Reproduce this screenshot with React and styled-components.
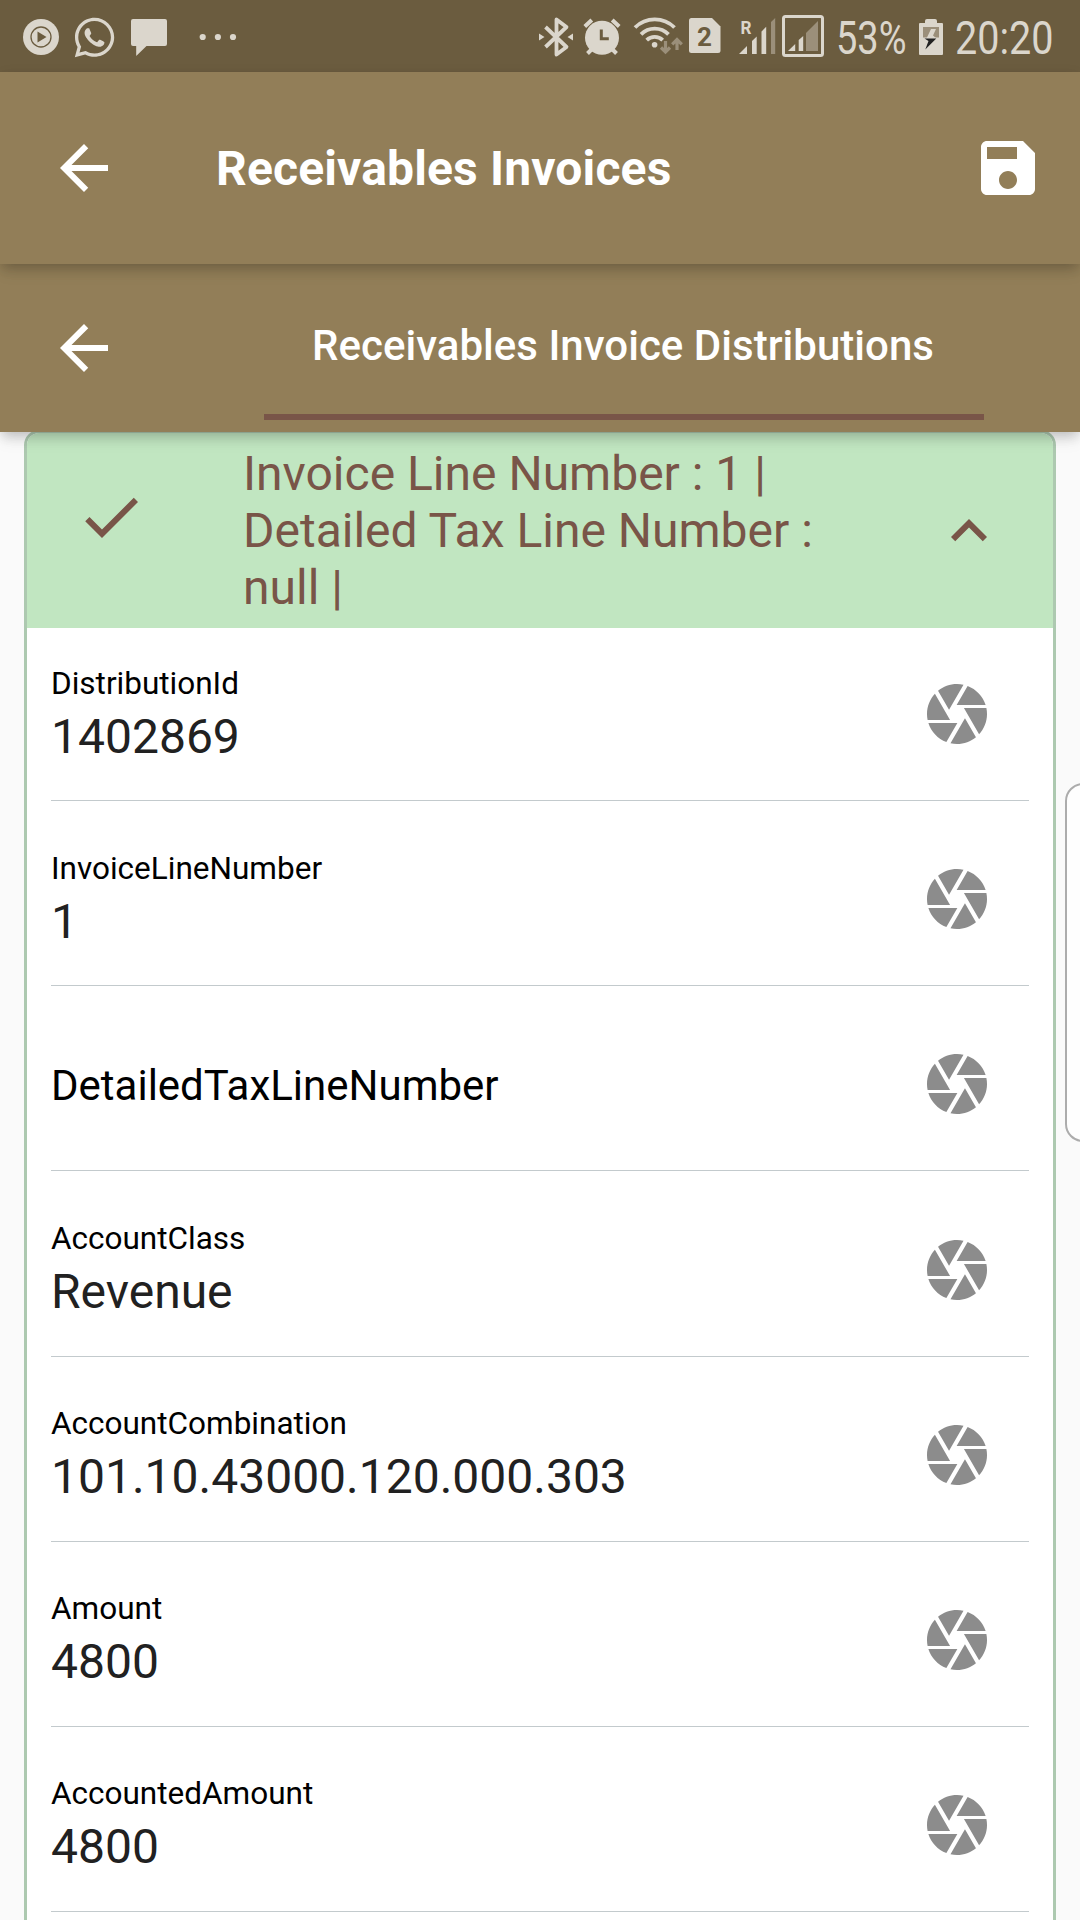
import React from "react";
import styled, { createGlobalStyle } from "styled-components";
import { FaWhatsapp } from "react-icons/fa";

const GlobalStyle = createGlobalStyle`
  *, *::before, *::after { box-sizing: border-box; }
  html, body { margin: 0; padding: 0; background: #fafafa; }
  body { font-family: Roboto, "Noto Sans", sans-serif; overflow: hidden; }
`;

const LIGHT = "#dbd6cc";
const DIM = "#9b8f7a";
const DARK = "#6b5c3f";

const Screen = styled.div`
  position: relative;
  display: flex;
  flex-direction: column;
  width: 1080px;
  height: 1920px;
  overflow: hidden;
  background: #fafafa;
`;

const StatusBar = styled.header`
  flex: none;
  display: flex;
  align-items: flex-start;
  height: 72px;
  padding-right: 1px;
  background: ${DARK};
  color: ${LIGHT};
`;

const StatusIcon = styled.svg`
  flex: none;
  display: block;
  width: ${(p) => p.$w}px;
  height: 72px;
  margin-left: ${(p) => p.$gap || 0}px;
  fill: ${LIGHT};
`;

const WhatsApp = styled(FaWhatsapp)`
  flex: none;
  width: 45px;
  height: 45px;
  margin: 14.5px 0 0 13px;
`;

const Spacer = styled.div`
  flex: 1;
`;

const StatusText = styled.div`
  flex: none;
  width: ${(p) => p.$w}px;
  margin-left: ${(p) => p.$gap}px;
  font-size: 46px;
  line-height: 77px;
  white-space: nowrap;
  transform: scaleX(${(p) => p.$scale});
  transform-origin: 0 50%;
`;

const Bar = styled.div`
  position: relative;
  z-index: ${(p) => p.$z};
  flex: none;
  display: flex;
  align-items: center;
  height: ${(p) => p.$h}px;
  padding: 0 36px 0 48px;
  background: #927e58;
  color: #fff;
  box-shadow: 0 6px 12px -3px rgba(0, 0, 0, 0.18), 0 10px 15px rgba(0, 0, 0, 0.05),
    0 3px 14px rgba(0, 0, 0, 0.06);
`;

const Icon = styled.svg`
  flex: none;
  display: block;
  width: 72px;
  height: 72px;
  fill: currentColor;
`;

const Title = styled.h1`
  flex: 1;
  margin: 0 0 0 96px;
  padding-top: 2px;
  font-size: 48px;
  line-height: 56px;
  font-weight: 700;
  letter-spacing: 0.15px;
  white-space: nowrap;
`;

const Tab = styled.div`
  display: flex;
  align-items: center;
  justify-content: center;
  width: 720px;
  height: 144px;
  margin: 0 0 0 144px;
  border-bottom: 6px solid #795548;
  font-size: 42px;
  line-height: 49px;
  font-weight: 500;
  letter-spacing: 0.03px;
  white-space: nowrap;
`;

const TabLabel = styled.span`
  padding-right: 2px;
`;

const Card = styled.section`
  flex: none;
  display: flex;
  flex-direction: column;
  height: 1540px;
  margin: -2px 24px 0;
  border: 3px solid #adc9b0;
  border-radius: 15px;
  background: #fff;
  overflow: hidden;
`;

const CardHeader = styled.div`
  flex: none;
  display: flex;
  align-items: center;
  height: 195px;
  padding: 0 48px;
  background: #c1e6c1;
  color: #795548;
`;

const CheckSlot = styled.div`
  flex: none;
  width: 168px;
  padding-bottom: 27px;
`;

const CardTitle = styled.div`
  flex: 1;
  font-size: 48px;
  line-height: 57px;
  white-space: pre;
`;

const Fields = styled.div`
  display: flex;
  flex-direction: column;
  padding: 0 24px;
`;

const Field = styled.div`
  flex: none;
  display: flex;
  justify-content: space-between;
  align-items: flex-end;
  height: 185.15px;
  padding-bottom: 31px;
  padding-right: 36px;
  border-bottom: 1px solid #c3cacd;
  &:first-child { height: 173.2px; }
`;

const FieldText = styled.div`
  display: flex;
  flex-direction: column;
  justify-content: center;
  height: 110px;
  padding-top: ${(p) => (p.$empty ? 4 : 0.7)}px;
`;

const Label = styled.label`
  font-size: ${(p) => (p.$empty ? 42 : 31.5)}px;
  line-height: ${(p) => (p.$empty ? 50 : 38)}px;
  color: #000;
`;

const Value = styled.span`
  font-size: 48px;
  line-height: 56px;
  margin-top: 6px;
  color: #212121;
`;

const IconSlot = styled.div`
  display: flex;
  align-items: center;
  height: 110px;
  color: #8c8c8c;
`;

const EdgePanel = styled.aside`
  position: absolute;
  top: 783px;
  right: -22px;
  width: 37px;
  height: 359px;
  border: 2px solid #acacac;
  border-radius: 18px;
  background: #fefefe;
`;

const BackIcon = () => (
  <Icon viewBox="0 0 24 24">
    <path d="M20 11H7.83l5.59-5.59L12 4l-8 8 8 8 1.41-1.41L7.83 13H20v-2z" />
  </Icon>
);

const SaveIcon = () => (
  <Icon viewBox="0 0 24 24">
    <path d="M17 3H5c-1.11 0-2 .9-2 2v14c0 1.1.89 2 2 2h14c1.1 0 2-.9 2-2V7l-4-4zm-5 16c-1.66 0-3-1.34-3-3s1.34-3 3-3 3 1.34 3 3-1.34 3-3 3zm3-10H5V5h10v4z" />
  </Icon>
);

const CheckIcon = () => (
  <Icon viewBox="0 0 24 24">
    <path d="M9 16.17L4.83 12l-1.42 1.41L9 19 21 7l-1.41-1.41z" />
  </Icon>
);

const CollapseIcon = () => (
  <Icon viewBox="0 0 24 24">
    <path d="M12 8l-6 6 1.41 1.41L12 10.83l4.59 4.58L18 14z" />
  </Icon>
);

const ApertureIcon = () => (
  <Icon viewBox="0 0 24 24">
    <path d="M9.4 10.5l4.77-8.26C13.47 2.09 12.75 2 12 2c-2.4 0-4.6.85-6.32 2.25l3.66 6.35.06-.1zM21.54 9c-.92-2.92-3.15-5.26-6-6.34L11.88 9h9.66zm.26 1h-7.49l.29.5 4.76 8.25C21 16.97 22 14.61 22 12c0-.69-.07-1.35-.2-2zM8.54 12l-3.9-6.75C3.01 7.03 2 9.39 2 12c0 .69.07 1.35.2 2h7.49l-1.15-2zm-6.08 3c.92 2.92 3.15 5.26 6 6.34L12.12 15H2.46zm11.27 0l-3.9 6.76c.7.15 1.42.24 2.17.24 2.4 0 4.6-.85 6.32-2.25l-3.66-6.35-.93 1.6z" />
  </Icon>
);

const fields = [
  { label: "DistributionId", value: "1402869" },
  { label: "InvoiceLineNumber", value: "1" },
  { label: "DetailedTaxLineNumber" },
  { label: "AccountClass", value: "Revenue" },
  { label: "AccountCombination", value: "101.10.43000.120.000.303" },
  { label: "Amount", value: "4800" },
  { label: "AccountedAmount", value: "4800" },
];

const Status = () => (
  <StatusBar>
    <StatusIcon $w={36} $gap={23} viewBox="23 0 36 72">
      <circle cx="41" cy="37" r="18" />
      <circle cx="41" cy="37" r="10" fill="none" stroke={DARK} strokeWidth="1.3" />
      <path d="M37.5 31.5l9 5.5-9 5.5z" fill={DARK} />
    </StatusIcon>
    <WhatsApp />
    <StatusIcon $w={36} $gap={14} viewBox="131 0 36 72">
      <path d="M133 19h32a2 2 0 0 1 2 2v23a2 2 0 0 1-2 2h-18.500l-10.300 10v-10h-3.200a2 2 0 0 1-2-2v-23a2 2 0 0 1 2-2z" />
    </StatusIcon>
    <StatusIcon $w={40} $gap={31} viewBox="198 0 40 72">
      <circle cx="202.700" cy="37" r="3.100" />
      <circle cx="217.900" cy="37" r="3.100" />
      <circle cx="233" cy="37" r="3.100" />
    </StatusIcon>
    <Spacer />
    <StatusIcon $w={36} viewBox="538 0 36 72">
      <path d="M545.500 27l21 20-10 7.500v-35l10 7.500-21 20" fill="none" stroke={LIGHT} strokeWidth="3.800" strokeLinejoin="round" />
      <path d="M539 33.500l5.500 3.500-5.500 3.500zM573 33.500l-5.500 3.500 5.500 3.500z" />
    </StatusIcon>
    <StatusIcon $w={38} $gap={9} viewBox="583 0 38 72">
      <circle cx="602" cy="37.800" r="17" />
      <path d="M584.800 26.500l7-6.500M619.200 26.500l-7-6.500" stroke={LIGHT} strokeWidth="4" />
      <path d="M592 49l-4.500 4.500M612 49l4.500 4.500" stroke={LIGHT} strokeWidth="4" />
      <path d="M601.300 29.500v9.300h7.500" fill="none" stroke={DARK} strokeWidth="3" />
    </StatusIcon>
    <StatusIcon $w={50} $gap={12} viewBox="633 0 50 72">
      <g fill="none" stroke={LIGHT} strokeWidth="3.800">
        <path d="M635 27.500a28 28 0 0 1 39.500 0" />
        <path d="M641 34.300a19.500 19.500 0 0 1 27.500 0" />
        <path d="M646.700 40.200a11.500 11.500 0 0 1 16 0" />
      </g>
      <circle cx="654.600" cy="44.700" r="2.800" />
      <g fill="none" stroke={DIM} strokeWidth="3.200">
        <path d="M665.500 41v11M661 47.500l4.500 4.500 4.500-4.500" />
        <path d="M677 50v-10.500M672.200 44.300l4.800-4.800 4.800 4.800" />
      </g>
    </StatusIcon>
    <StatusIcon $w={32} $gap={5.5} viewBox="688.5 0 32 72">
      <path d="M691 18h20.500l8.500 8.500v24a2.500 2.500 0 0 1-2.500 2.500h-26.500a2.500 2.500 0 0 1-2.500-2.500v-30a2.500 2.500 0 0 1 2.500-2.500z" />
      <text x="704" y="45.500" textAnchor="middle" fontSize="26" fontWeight="700" fill={DARK}>2</text>
    </StatusIcon>
    <StatusIcon $w={37} $gap={18.5} viewBox="739 0 37 72">
      <text x="740.500" y="33.700" fontSize="18" fontWeight="700" textLength="11" lengthAdjust="spacingAndGlyphs">R</text>
      <path d="M739 54l8-8v8zM752 54v-13l4.700-4.500v17.500zM761.500 54v-22.500l4.700-4.700v27.200z" />
      <path d="M771 54v-32l4.200-4v36z" fill={DIM} />
    </StatusIcon>
    <StatusIcon $w={42} $gap={6} viewBox="782 0 42 72">
      <rect x="783.500" y="16.500" width="39" height="39" rx="2" fill="none" stroke={LIGHT} strokeWidth="3" />
      <path d="M788 51l7.200-7v7zM798.700 51v-11l4.500-4v15z" />
      <path d="M806 51v-18l12-12v30z" fill={DIM} />
    </StatusIcon>
    <StatusText $w={70} $gap={12} $scale={0.825}>53%</StatusText>
    <StatusIcon $w={24} $gap={13} viewBox="919 0 24 72">
      <path d="M925 23v-2a2 2 0 0 1 2-2h8a2 2 0 0 1 2 2v2h5a1 1 0 0 1 1 1v30a1 1 0 0 1-1 1h-22a1 1 0 0 1-1-1v-30a1 1 0 0 1 1-1z" />
      <path d="M923 27h16v10.500h-16z" fill={DIM} />
      <path d="M926.500 38.500l4.500-9.500h5l-3 6.500 3 2.500z" />
      <path d="M924.500 38.500h4l1 0h6.800l-11 11 3.200-8.500z" fill="#222" />
    </StatusIcon>
    <StatusText $w={124} $gap={12} $scale={0.86}>20:20</StatusText>
  </StatusBar>
);

export default function App() {
  return (
    <Screen>
      <GlobalStyle />
      <Status />
      <Bar $h={192} $z={3}>
        <BackIcon />
        <Title>Receivables Invoices</Title>
        <SaveIcon />
      </Bar>
      <Bar $h={168} $z={2}>
        <BackIcon />
        <Tab>
          <TabLabel>Receivables Invoice Distributions</TabLabel>
        </Tab>
      </Bar>
      <Card>
        <CardHeader>
          <CheckSlot>
            <CheckIcon />
          </CheckSlot>
          <CardTitle>{"Invoice Line Number : 1 |\nDetailed Tax Line Number :\nnull |"}</CardTitle>
          <CollapseIcon />
        </CardHeader>
        <Fields>
          {fields.map((f) => (
            <Field key={f.label}>
              <FieldText $empty={!f.value}>
                <Label $empty={!f.value}>{f.label}</Label>
                {f.value && <Value>{f.value}</Value>}
              </FieldText>
              <IconSlot>
                <ApertureIcon />
              </IconSlot>
            </Field>
          ))}
        </Fields>
      </Card>
      <EdgePanel />
    </Screen>
  );
}
